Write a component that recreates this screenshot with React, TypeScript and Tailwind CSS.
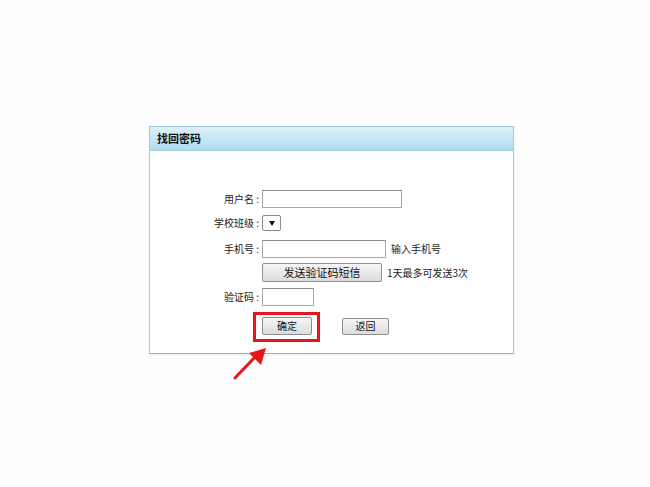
import React from "react";

const font = { fontFamily: '"Noto Sans CJK SC", "Noto Sans", sans-serif' };

function Label({ children }: { children: React.ReactNode }) {
  return (
    <div className="w-[112px] shrink-0 text-right text-[10px] leading-none text-[#222] pr-[3px]">
      {children}
    </div>
  );
}

export default function App() {
  return (
    <div className="w-[650px] h-[487px] bg-[#fefefe] relative" style={font}>
      <div className="pt-[126px] pl-[149px]">
        <div className="w-[365px] h-[228px] border border-[#a3cbdb] border-b-[#8fb3bf] bg-white shadow-[0_1px_2px_rgba(0,0,0,0.08)]">
          <div className="h-[24px] flex items-center pl-[7px] bg-gradient-to-b from-[#dcf0fa] to-[#b3dcef] border-b border-[#a0cee2]">
            <span className="text-[11px] font-bold text-[#111]">找回密码</span>
          </div>
          <div className="pt-[35px] flex flex-col">
            <div className="h-[25px] flex items-center">
              <Label>用户名 :</Label>
              <div className="w-[140px] h-[18px] border border-[#a7a7a7] border-t-[#8c8c8c] bg-white" />
            </div>
            <div className="h-[24px] flex items-center">
              <Label>学校班级 :</Label>
              <div className="w-[19px] h-[16px] border border-[#8c8c8c] rounded-[2px] bg-white flex items-center justify-center">
                <svg width="6" height="5" viewBox="0 0 6 5">
                  <polygon points="0,0 6,0 3,5" fill="#111" />
                </svg>
              </div>
            </div>
            <div className="h-[27px] flex items-center">
              <Label>手机号 :</Label>
              <div className="w-[124px] h-[18px] border border-[#a7a7a7] border-t-[#8c8c8c] bg-white" />
              <span className="ml-[5px] text-[10px] text-[#222] leading-none">输入手机号</span>
            </div>
            <div className="h-[21px] flex items-center">
              <div className="w-[112px] shrink-0" />
              <div className="w-[120px] h-[19px] border border-[#8e8e8e] rounded-[2px] bg-gradient-to-b from-[#f6f6f6] to-[#dcdcdc] flex items-center justify-center text-[11px] text-[#111] leading-none">
                发送验证码短信
              </div>
              <span className="ml-[5px] text-[10px] text-[#222] leading-none">1天最多可发送3次</span>
            </div>
            <div className="h-[27px] flex items-center">
              <Label>验证码 :</Label>
              <div className="w-[52px] h-[18px] border border-[#a7a7a7] border-t-[#8c8c8c] bg-white" />
            </div>
            <div className="h-[32px] flex items-center">
              <div className="w-[112px] shrink-0" />
              <div className="relative">
                <div className="w-[50px] h-[18px] border border-[#8e8e8e] rounded-[2px] bg-gradient-to-b from-[#f6f6f6] to-[#dcdcdc] flex items-center justify-center text-[10px] text-[#111] leading-none">
                  确定
                </div>
                <div className="absolute left-[-9px] top-[-5px] w-[67px] h-[30px] border-[3px] border-[#e8141a]" />
              </div>
              <div className="ml-[30px] w-[47px] h-[17px] border border-[#8e8e8e] rounded-[2px] bg-gradient-to-b from-[#f6f6f6] to-[#dcdcdc] flex items-center justify-center text-[10px] text-[#111] leading-none">
                返回
              </div>
            </div>
          </div>
        </div>
      </div>
      <svg className="absolute left-0 top-0" width="650" height="487" viewBox="0 0 650 487">
        <line x1="235" y1="378" x2="255" y2="357" stroke="#e8141a" strokeWidth="3" strokeLinecap="round" />
        <polygon points="266,348 261,365 249,353" fill="#e8141a" />
      </svg>
    </div>
  );
}
